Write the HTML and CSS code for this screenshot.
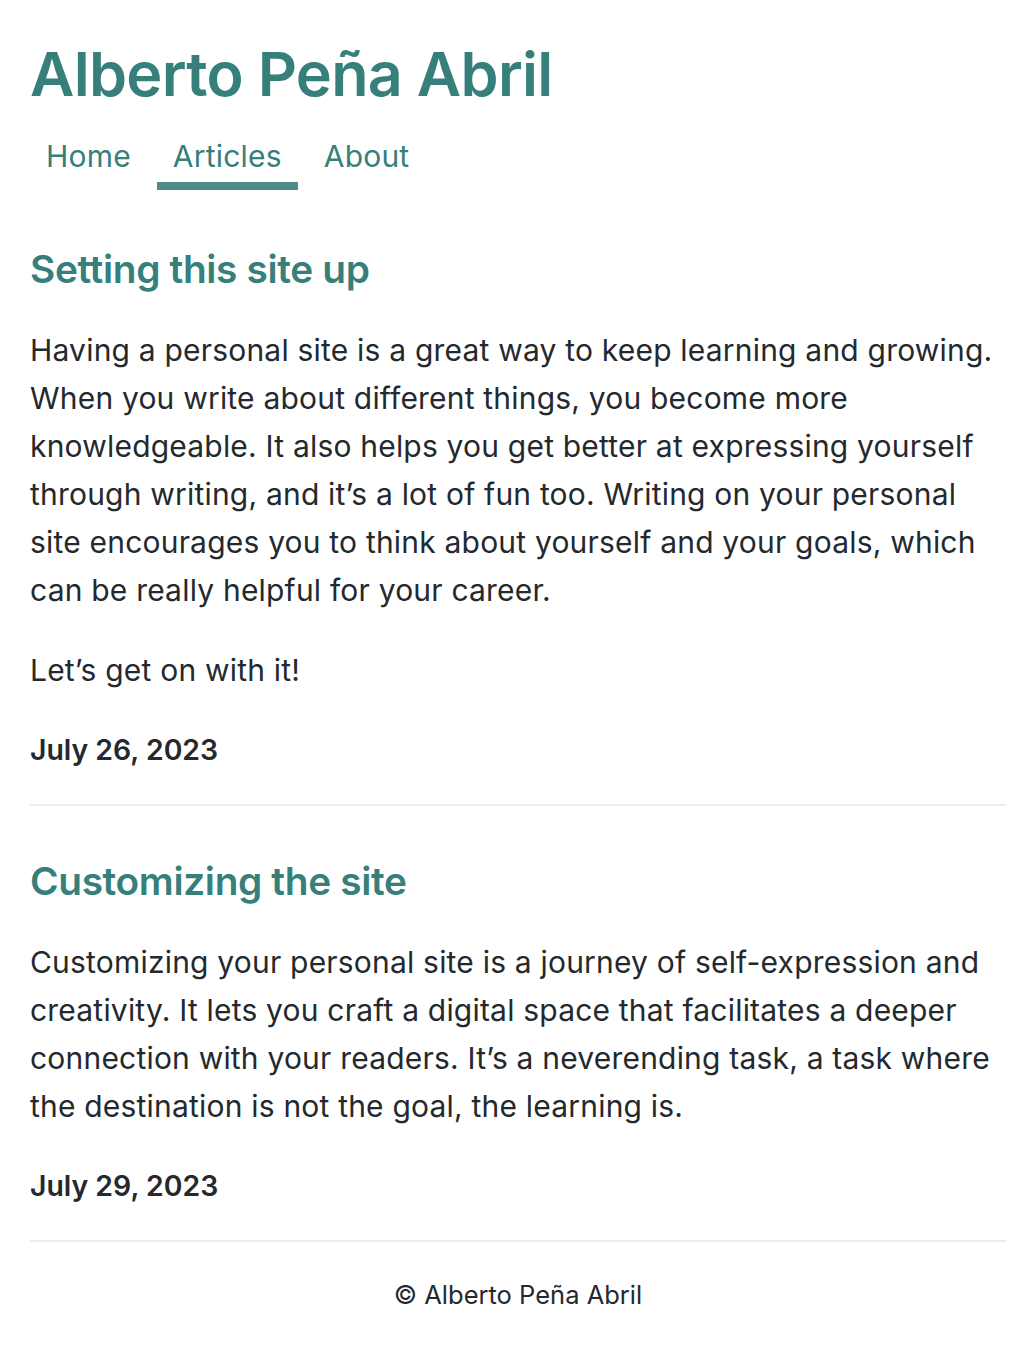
FILE: index.html
```html
<!DOCTYPE html>
<html lang="en">
<head>
<meta charset="utf-8">
<title>Alberto Peña Abril</title>
<link rel="stylesheet" href="styles.css">
</head>
<body>
<div class="page">
  <header class="site-header">
    <h1 class="site-title">Alberto Peña Abril</h1>
    <nav class="nav">
      <a class="nav-link" href="#">Home</a>
      <a class="nav-link active" href="#">Articles</a>
      <a class="nav-link" href="#">About</a>
    </nav>
  </header>
  <main class="articles">
    <article class="post">
      <h2 class="post-title">Setting this site up</h2>
      <p class="post-text">Having a personal site is a great way to keep learning and growing. When you write about different things, you become more knowledgeable. It also helps you get better at expressing yourself through writing, and it’s a lot of fun too. Writing on your personal site encourages you to think about yourself and your goals, which can be really helpful for your career.</p>
      <p class="post-text">Let’s get on with it!</p>
      <p class="post-date">July 26, 2023</p>
    </article>
    <article class="post">
      <h2 class="post-title">Customizing the site</h2>
      <p class="post-text">Customizing your personal site is a journey of self-expression and creativity. It lets you craft a digital space that facilitates a deeper connection with your readers. It’s a neverending task, a task where the destination is not the goal, the learning is.</p>
      <p class="post-date">July 29, 2023</p>
    </article>
  </main>
  <footer class="site-footer">© Alberto Peña Abril</footer>
</div>
</body>
</html>
```

FILE: styles.css
```css
* { box-sizing: border-box; }
html, body { margin: 0; padding: 0; background: #fff; }
body {
  font-family: Inter, "Noto Sans", sans-serif;
  color: #24292e;
  font-size: 30px;
  line-height: 48px;
  letter-spacing: 0.2px;
}
.page { padding: 0 30px; }
.site-title {
  margin: 0;
  padding-top: 36px;
  font-size: 61px;
  line-height: 76px;
  font-weight: 600;
  color: #367f7b;
  letter-spacing: -0.7px;
}
.nav {
  display: flex;
  gap: 10px;
  margin-top: 24px;
}
.nav-link {
  display: block;
  padding: 0 16px 6px;
  font-size: 30px;
  line-height: 40px;
  color: #367f7b;
  text-decoration: none;
  border-bottom: 8px solid transparent;
}
.nav-link.active { border-bottom-color: #4e8b8a; }
.articles { margin-top: 55px; }
.post {
  border-bottom: 2px solid #e9eeee;
  padding-bottom: 30px;
}
.post + .post { margin-top: 51px; }
.post-title {
  margin: 0 0 33px;
  font-size: 38.8px;
  line-height: 48px;
  font-weight: 600;
  color: #367f7b;
  letter-spacing: -0.35px;
}
.post-text { margin: 0 0 32px; }
.post-date {
  margin: 0;
  font-weight: 600;
  font-size: 28.4px;
  line-height: 48px;
  letter-spacing: 0;
}
.site-footer {
  text-align: center;
  font-size: 25.5px;
  line-height: 40px;
  letter-spacing: 0;
  padding: 33px 0 40px;
}
```
